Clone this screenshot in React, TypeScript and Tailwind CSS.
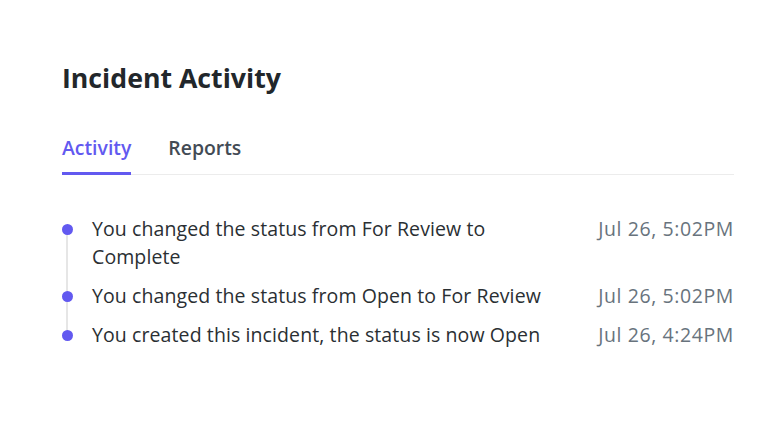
import React from "react";

const events = [
  { text: "You changed the status from For Review to Complete", date: "Jul 26, 5:02PM" },
  { text: "You changed the status from Open to For Review", date: "Jul 26, 5:02PM" },
  { text: "You created this incident, the status is now Open", date: "Jul 26, 4:24PM" },
];

function App() {
  return (
    <div className="min-h-screen bg-white pl-[62px] pr-[50px] pt-[60px] font-['Open_Sans',sans-serif]">
      <h1 className="text-[26.7px] font-bold leading-[36px] text-[#22272b]">Incident Activity</h1>

      {/* tabs */}
      <div className="mt-[40px] flex gap-[37px] border-b border-[#ececec]">
        <button className="-mb-px border-b-[3px] border-[#6259f0] pb-[12px] text-[19.4px] font-semibold leading-6 text-[#6259f0]">
          Activity
        </button>
        <button className="-mb-px border-b-[3px] border-transparent pb-[12px] text-[19.4px] font-semibold leading-6 text-[#434b55]">
          Reports
        </button>
      </div>

      {/* timeline */}
      <ul className="mt-[40px] flex flex-col gap-[11px]">
        {events.map((ev, i) => (
          <li key={i} className="relative flex items-start justify-between gap-10">
            {i < events.length - 1 && (
              <span className="absolute left-[4px] top-[14px] h-[calc(100%+11px)] w-[2px] bg-[#e6e6e6]" />
            )}
            <div className="flex items-start gap-[19px]">
              <span className="relative mt-[8.5px] h-[11px] w-[11px] shrink-0 rounded-full bg-[#6259f0]" />
              <p className="max-w-[460px] text-[19.5px] leading-[28px] tracking-[0.1px] text-[#2a2f33]">{ev.text}</p>
            </div>
            <span className="shrink-0 text-[19.5px] leading-[28px] tracking-[0.6px] text-[#68737d]">{ev.date}</span>
          </li>
        ))}
      </ul>
    </div>
  );
}

export default App;
